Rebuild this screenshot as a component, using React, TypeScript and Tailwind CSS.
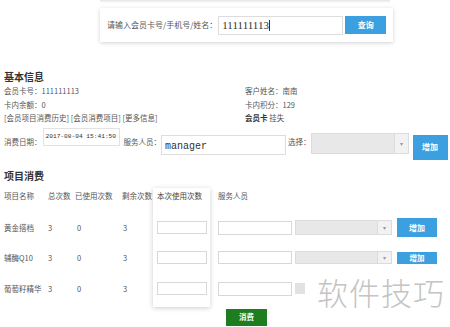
import React from "react";

const cjk = { fontFamily: '"Noto Sans CJK SC", "Noto Sans", sans-serif' };
const mono = { fontFamily: '"Liberation Mono", "DejaVu Sans Mono", monospace' };

function SelectBox({ w, h, arrowW }: { w: number; h: number; arrowW: number }) {
  return (
    <div className="flex shrink-0 border border-[#dcdcdc] bg-[#e8e8e8]" style={{ width: w, height: h }}>
      <div className="flex-1" />
      <div className="flex items-center justify-center border-l border-[#dcdcdc] bg-[#f2f2f2] text-[6px] text-[#999]" style={{ width: arrowW }}>
        ▾
      </div>
    </div>
  );
}

function BlueBtn({ w, h, label, small }: { w: number; h: number; label: string; small?: boolean }) {
  return (
    <div
      className="flex shrink-0 items-center justify-center whitespace-nowrap bg-[#3c9fe0] font-bold text-white"
      style={{ width: w, height: h, ...cjk, fontSize: small ? 7.5 : 8, lineHeight: small ? "11px" : undefined }}
    >
      {label}
    </div>
  );
}

export default function App() {
  const rows = [
    { name: "黄金搭档", h: 30 },
    { name: "辅酶Q10", h: 30 },
    { name: "葡萄籽精华", h: 32 },
  ];
  return (
    <div className="relative h-[327px] w-[450px] overflow-hidden bg-white text-[#555]" style={cjk}>
      {/* faint cropped line at top */}
      <div className="ml-[100px] h-[3px] w-[290px] bg-gradient-to-b from-[#e4e4e4] to-white" />

      {/* search card */}
      <div className="ml-[100px] mt-[5px] flex h-[34px] w-[293px] items-center bg-white pl-[7px] shadow-[0_1px_4px_rgba(0,0,0,0.18)]">
        <span className="shrink-0 whitespace-nowrap text-[8px] text-[#555]">请输入会员卡号/手机号/姓名：</span>
        <div className="ml-[1px] flex h-[19px] w-[125px] shrink-0 items-center whitespace-nowrap border border-[#dddddd] pl-[3px] text-[11px] text-[#333]" style={{ fontFamily: '"Liberation Serif", serif' }}>
          111111113<span className="h-[11px] w-[1px] bg-[#333]" />
        </div>
        <div className="ml-[2px]">
          <BlueBtn w={41} h={18} label="查询" />
        </div>
      </div>

      {/* basic info */}
      <div className="ml-[4px] mt-[29px] text-[10px] font-bold leading-[12px] text-[#333]">基本信息</div>
      <div className="ml-[4px] mt-[1px] grid grid-cols-[241px_1fr] text-[7.5px] leading-[13.5px]">
        <div>会员卡号：111111113</div>
        <div>客户姓名：南南</div>
        <div>卡内余额：0</div>
        <div>卡内积分：129</div>
        <div className="whitespace-nowrap">[会员项目消费历史] [会员消费项目] [更多信息]</div>
        <div>
          <span className="font-bold text-[#333]">会员卡</span> 挂失
        </div>
      </div>

      {/* consume row */}
      <div className="mt-[2px] flex h-[33px] items-start">
        <span className="ml-[4px] mt-[9px] shrink-0 whitespace-nowrap text-[7.5px]">消费日期：</span>
        <div className="ml-[1px] mt-[1px] flex h-[18px] w-[77px] shrink-0 items-start whitespace-nowrap border border-[#e2e2e2] pl-[2px] pt-[3px] text-[6.2px] text-[#333]" style={mono}>
          2017-08-04 15:41:50
        </div>
        <span className="ml-[4px] mt-[9px] shrink-0 whitespace-nowrap text-[7.5px]">服务人员：</span>
        <div className="mt-[8px] flex h-[20px] w-[125px] shrink-0 items-center border border-[#dddddd] pl-[3px] pt-[3px] text-[10px] text-[#333]" style={mono}>
          manager
        </div>
        <span className="ml-[2px] mt-[9px] shrink-0 whitespace-nowrap text-[7.5px]">选择：</span>
        <div className="mt-[6px]">
          <SelectBox w={98} h={21} arrowW={14} />
        </div>
        <div className="ml-[4px] mt-[8px]">
          <BlueBtn w={35} h={25} label="增加" />
        </div>
      </div>

      {/* project consume */}
      <div className="ml-[4px] mt-[9px] text-[10px] font-bold leading-[14px] text-[#333]">项目消费</div>

      <div className="mt-[5px] flex">
        {/* left columns */}
        <div className="flex w-[153px] shrink-0 flex-col pl-[4px] text-[7.5px]">
          <div className="grid h-[25px] grid-cols-[44px_27px_47px_31px] items-start pt-[3px] leading-[10px]">
            <span className="whitespace-nowrap">项目名称</span>
            <span className="whitespace-nowrap">总次数</span>
            <span className="whitespace-nowrap">已使用次数</span>
            <span className="whitespace-nowrap">剩余次数</span>
          </div>
          {rows.map((r) => (
            <div key={r.name} className="grid grid-cols-[44px_27px_47px_31px] items-center" style={{ height: r.h }}>
              <span className="whitespace-nowrap">{r.name}</span>
              <span>3</span>
              <span className="pl-[2px]">0</span>
              <span className="pl-[1px]">3</span>
            </div>
          ))}
        </div>

        {/* floating card column */}
        <div className="flex h-[119px] w-[57px] shrink-0 flex-col bg-white shadow-[0_1px_5px_rgba(0,0,0,0.2)]">
          <div className="flex h-[25px] items-start whitespace-nowrap pl-[4px] pt-[3px] text-[7.5px] leading-[10px] text-[#444]">本次使用次数</div>
          {rows.map((r) => (
            <div key={r.name} className="flex items-center pl-[4px]" style={{ height: r.h }}>
              <div className="h-[13px] w-[50px] border border-[#d8d8d8]" />
            </div>
          ))}
        </div>

        {/* right columns */}
        <div className="flex flex-col pl-[8px] text-[7.5px]">
          <div className="flex h-[25px] items-start whitespace-nowrap pt-[3px] leading-[10px]">服务人员</div>
          <div className="flex items-center" style={{ height: 30 }}>
            <div className="h-[14px] w-[74px] shrink-0 border border-[#d8d8d8]" />
            <div className="ml-[3px]">
              <SelectBox w={97} h={15} arrowW={14} />
            </div>
            <div className="ml-[5px]">
              <BlueBtn w={40} h={19} label="增加" />
            </div>
          </div>
          <div className="flex items-start pt-[8px]" style={{ height: 30 }}>
            <div className="h-[13px] w-[74px] shrink-0 border border-[#d8d8d8]" />
            <div className="ml-[3px]">
              <SelectBox w={97} h={13} arrowW={14} />
            </div>
            <div className="ml-[5px] mt-[1px]">
              <BlueBtn w={40} h={12} label="增加" small />
            </div>
          </div>
          <div className="flex items-center" style={{ height: 32 }}>
            <div className="h-[14px] w-[74px] shrink-0 border border-[#d8d8d8]" />
            <div className="ml-[3px] h-[11px] w-[10px] shrink-0 bg-[#e2e2e2]" />
          </div>
        </div>
      </div>

      {/* submit */}
      <div className="ml-[226px] mt-[2px] flex h-[17px] w-[41px] items-center justify-center bg-[#1e7d1e] text-[7.5px] font-bold text-white">
        消费
      </div>

      {/* watermark */}
      <div className="absolute left-[316px] top-[272px] flex h-[38px] w-[134px] items-center justify-end pr-[5px]">
        <span className="text-[31px] font-light leading-none tracking-[1px] text-[#c4c4c4]">软件技巧</span>
      </div>
    </div>
  );
}
